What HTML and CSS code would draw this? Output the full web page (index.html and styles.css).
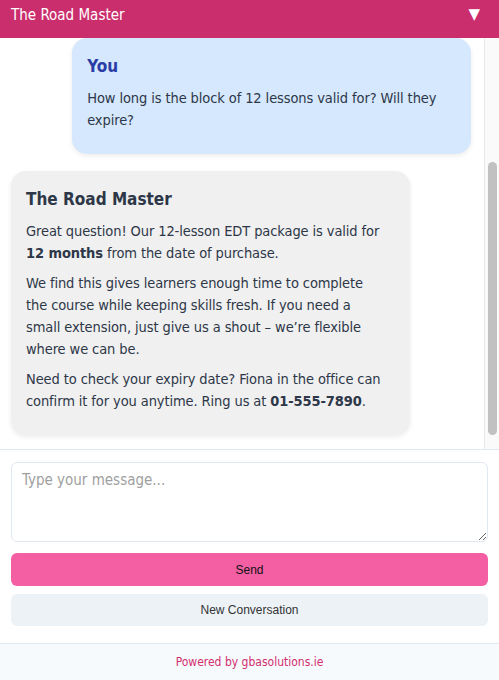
FILE: index.html
```
<!DOCTYPE html>
<html lang="en">
<head>
  <meta charset="UTF-8" />
  <meta name="viewport" content="width=device-width, initial-scale=1.0"/>
  <title>The Road Master - Chat</title>
  <link rel="stylesheet" href="styles.css">
</head>
<body>

<div class="chat-widget">
  <header class="chat-header">
    <div class="chat-title">The Road Master</div>
    <button class="toggle-btn" aria-label="Minimise">&#9660;</button>
  </header>

  <div class="chat-body">
    <div class="chat-messages" id="chat-messages">
      <div class="message user">
        <div class="sender">You</div>
        <p>How long is the block of 12 lessons valid for? Will they expire?</p>
      </div>

      <div class="message bot">
        <div class="sender">The Road Master</div>
        <p>Great question! Our 12-lesson EDT package is valid for <strong>12 months</strong> from the date of purchase.</p>
        <p>We find this gives learners enough time to complete the course while keeping skills fresh. If you need a small extension, just give us a shout – we’re flexible where we can be.</p>
        <p>Need to check your expiry date? Fiona in the office can confirm it for you anytime. Ring us at <strong>01-555-7890</strong>.</p>
      </div>
    </div>

    
    <div class="scroll-track">
      <div class="scroll-thumb"></div>
    </div>
  </div>

  <div class="chat-input">
    <textarea placeholder="Type your message..."></textarea>
    <button class="send-btn">Send</button>
    <button class="new-btn">New Conversation</button>
  </div>

  <footer class="chat-footer">
    <a href="#">Powered by gbasolutions.ie</a>
  </footer>
</div>

</body>
</html>
```

FILE: styles.css
```
* {
  box-sizing: border-box;
}

body {
  margin: 0;
  font-family: "DejaVu Sans Condensed", "DejaVu Sans", sans-serif;
  font-stretch: condensed;
  background: #fff;
  color: #2d3748;
}

.chat-widget {
  height: 680px;
  display: flex;
  flex-direction: column;
}

.chat-header {
  background-color: #cb2e6d;
  height: 38px;
  flex-shrink: 0;
  padding: 4px 11px 0 11px;
  display: flex;
  justify-content: space-between;
  align-items: flex-start;
}

.chat-title {
  color: white;
  font-size: 15px;
  line-height: 22px;
}

.toggle-btn {
  background: none;
  border: none;
  color: white;
  font-size: 15px;
  line-height: 18px;
  padding: 0;
  margin-top: 1px;
  margin-right: 8px;
  cursor: pointer;
  font-family: "DejaVu Sans", sans-serif;
}

.chat-body {
  flex: 1;
  display: flex;
  min-height: 0;
}

.chat-messages {
  flex: 1;
  overflow: hidden;
  padding: 0 13px 14px 11px;
  display: flex;
  flex-direction: column;
  justify-content: flex-end;
  gap: 17px;
}

.scroll-track {
  width: 15px;
  background: #fafafa;
  border-left: 1px solid #e8e8e8;
  padding: 124px 2px 14px 3px;
  display: flex;
}

.scroll-thumb {
  flex: 1;
  background: #c1c1c1;
  border-radius: 5px;
}

.message {
  width: 86.7%;
  padding: 15px 25px 15px 15px;
  border-radius: 15px;
  box-shadow: 0 2px 5px rgba(0,0,0,0.08);
  font-size: 14.5px;
  letter-spacing: -0.1px;
  line-height: 22px;
  flex-shrink: 0;
}

.message .sender {
  font-size: 17px;
  letter-spacing: 0;
  line-height: 26px;
  font-weight: bold;
  margin-bottom: 8px;
}

.message p {
  margin: 0 0 8px 0;
}

.message.user {
  align-self: flex-end;
  background: #d5e8fd;
}

.message.user .sender {
  color: #2a3da6;
}

.message.bot {
  align-self: flex-start;
  background: #f0f0f0;
}

.chat-input {
  border-top: 1px solid #e2e8f0;
  padding: 12px 11px 17px 11px;
  display: flex;
  flex-direction: column;
}

.chat-input textarea {
  height: 80px;
  border: 1px solid #e2e8f0;
  border-radius: 6px;
  padding: 8px 10px;
  font-family: inherit;
  font-stretch: condensed;
  font-size: 15px;
  color: #2d3748;
  resize: vertical;
}

.chat-input textarea::placeholder {
  color: #a0a0a0;
}

.send-btn,
.new-btn {
  border: none;
  border-radius: 6px;
  font-family: "Liberation Sans", Arial, sans-serif;
  font-size: 12px;
  cursor: pointer;
}

.send-btn {
  margin-top: 11px;
  height: 33px;
  background: #f45fa3;
  color: #111;
}

.new-btn {
  margin-top: 8px;
  height: 32px;
  background: #edf2f7;
  color: #333;
}

.chat-footer {
  height: 37px;
  flex-shrink: 0;
  border-top: 1px solid #e2e8f0;
  background: #f7fafc;
  display: flex;
  justify-content: center;
  align-items: center;
}

.chat-footer a {
  color: #d12e6f;
  text-decoration: none;
  font-size: 12px;
}
```
